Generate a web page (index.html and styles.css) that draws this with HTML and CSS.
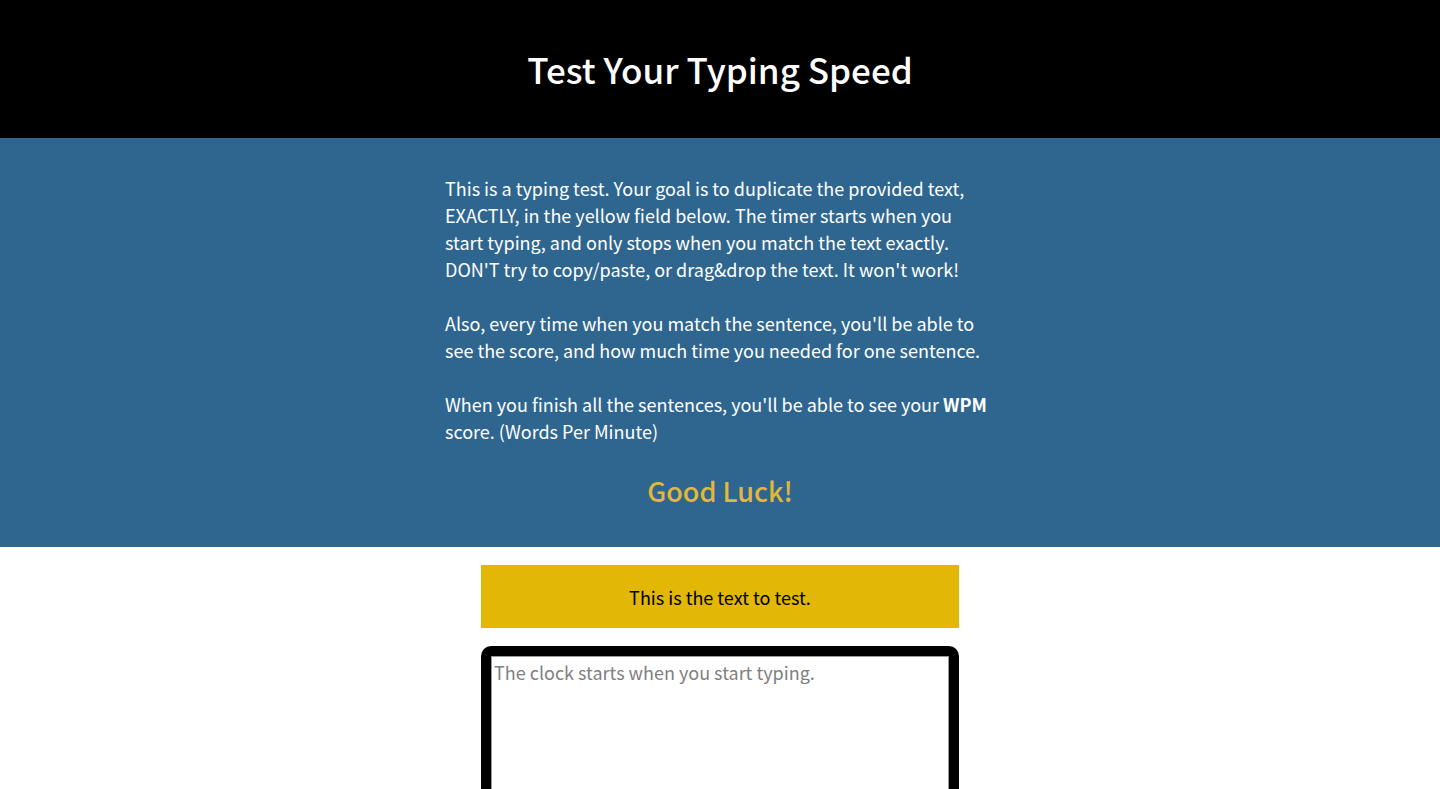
FILE: index.html
```
<!DOCTYPE html>
<html lang="en">
<head>
<meta charset="utf-8">
<title>Test Your Typing Speed</title>
<link rel="stylesheet" href="styles.css">
</head>
<body>
<header class="top">
  <h1 class="title">Test Your Typing Speed</h1>
</header>
<section class="intro">
  <div class="intro-inner">
    <p>This is a typing test. Your goal is to duplicate the provided text, EXACTLY, in the yellow field below. The timer starts when you start typing, and only stops when you match the text exactly. DON'T try to copy/paste, or drag&amp;drop the text. It won't work!</p>
    <p>Also, every time when you match the sentence, you'll be able to see the score, and how much time you needed for one sentence.</p>
    <p>When you finish all the sentences, you'll be able to see your <strong>WPM</strong> score. (Words Per Minute)</p>
    <h2 class="luck">Good Luck!</h2>
  </div>
</section>
<main class="test">
  <div class="test-text">This is the text to test.</div>
  <div class="test-wrap">
    <textarea class="test-area" placeholder="The clock starts when you start typing."></textarea>
  </div>
</main>
</body>
</html>
```
FILE: styles.css
```
html, body {
  margin: 0;
  padding: 0;
}
body {
  font-family: "Noto Sans CJK KR", "Noto Sans", sans-serif;
  font-size: 18px;
  background: #fff;
  color: #000;
}
.top {
  background: #000;
  padding: 47px 0;
}
.title {
  margin: 0;
  color: #fff;
  text-align: center;
  font-size: 35px;
  line-height: 44px;
  font-weight: 500;
}
.intro {
  background: #2f6690;
  padding: 37px 0 39px;
  color: #fff;
}
.intro-inner {
  width: 550px;
  margin: 0 auto;
}
.intro-inner p {
  margin: 0 4px 27px 0;
  line-height: 27px;
}
.intro-inner p:last-of-type {
  margin-bottom: 29px;
}
.intro-inner strong {
  font-weight: 700;
}
.luck {
  margin: 0;
  text-align: center;
  color: #e2b73a;
  font-size: 27px;
  line-height: 34px;
  font-weight: 500;
}
.test {
  width: 478px;
  margin: 18px auto 0;
  display: flex;
  flex-direction: column;
  gap: 18px;
}
.test-text {
  background: #e2b705;
  height: 63px;
  display: flex;
  align-items: center;
  justify-content: center;
  font-size: 18px;
}
.test-wrap {
  background: #000;
  border-radius: 10px;
  padding: 10px;
  display: flex;
}
.test-area {
  flex: 1;
  height: 180px;
  margin: 0;
  border: 1px solid #999;
  padding: 2px 2px;
  font-family: "Noto Sans CJK KR", "Noto Sans", sans-serif;
  font-size: 18px;
  line-height: 26px;
  font-weight: 400;
  resize: vertical;
  box-sizing: border-box;
}
.test-area::placeholder {
  color: #808080;
}
```
